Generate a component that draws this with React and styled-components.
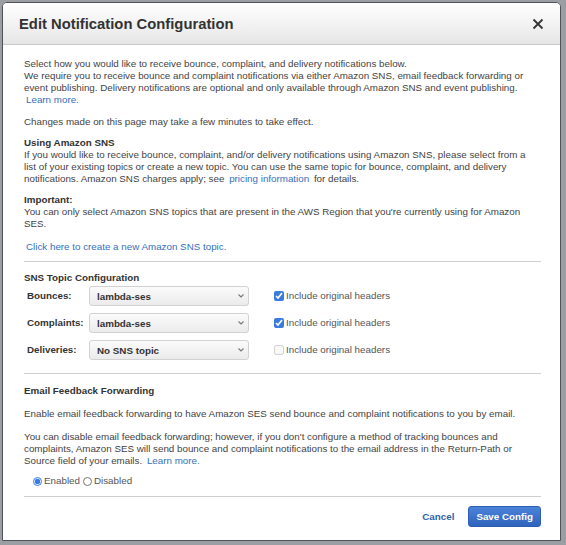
import styled, { createGlobalStyle } from "styled-components"

const GlobalStyle = createGlobalStyle`
  html, body {
    margin: 0;
    padding: 0;
    background: #9b9fa4;
  }
  body {
    font-family: "Liberation Sans", Arial, sans-serif;
  }
`

const Modal = styled.div`
  box-sizing: border-box;
  margin: 2px 0 0 2px;
  width: 559px;
  height: 539px;
  background: #fff;
  border: 1px solid #4f5357;
  border-radius: 5px 5px 0 0;
  display: flex;
  flex-direction: column;
  overflow: hidden;
`

const Header = styled.div`
  box-sizing: border-box;
  height: 42px;
  flex-shrink: 0;
  padding: 0 16px 0 16px;
  display: flex;
  align-items: center;
  justify-content: space-between;
  background: linear-gradient(#ffffff, #e6e6e6);
  border-bottom: 1px solid #c9c9c9;
`

const Title = styled.h2`
  margin: 0;
  font-size: 14.8px;
  font-weight: bold;
  color: #333;
`

const Close = styled.button`
  border: none;
  background: none;
  padding: 0;
  width: 12px;
  height: 12px;
  display: flex;
  cursor: pointer;
`

const Body = styled.div`
  padding: 13px 19px 0 21px;
  font-size: 9.8px;
  line-height: 12px;
  color: #444;
`

const Para = styled.p`
  margin: 0 0 ${(p) => p.$gap ?? 9}px 0;
`

const Heading = styled.div`
  font-weight: bold;
  color: #333;
  margin-bottom: ${(p) => p.$gap || 0}px;
`

const Link = styled.a`
  color: #3670bd;
  text-decoration: none;
  cursor: pointer;
  margin: 0 ${(p) => p.$after || 0}px 0 ${(p) => p.$indent || 0}px;
`

const Rule = styled.hr`
  border: none;
  border-top: 1px solid #cfcfcf;
  margin: ${(p) => p.$top ?? 9}px 0 ${(p) => p.$bottom ?? 9}px 0;
`

const TopicGrid = styled.div`
  display: flex;
  flex-direction: column;
  gap: 7px;
  margin-top: 2px;
`

const TopicRow = styled.div`
  display: flex;
  align-items: center;
  height: 20px;
`

const RowLabel = styled.label`
  width: 62px;
  padding-left: 3px;
  font-weight: bold;
  color: #333;
`

const SelectWrap = styled.div`
  position: relative;
  width: 160px;
  height: 20px;
`

const Select = styled.select`
  appearance: none;
  box-sizing: border-box;
  width: 100%;
  height: 100%;
  padding: 0 0 0 7px;
  border: 1px solid #d2d2d2;
  border-radius: 3px;
  background: linear-gradient(#fbfbfb, #ebebeb);
  font-family: inherit;
  font-size: 9.8px;
  font-weight: bold;
  color: #333;
  outline: none;
`

const Chevron = styled.svg`
  position: absolute;
  right: 5px;
  top: 8px;
  pointer-events: none;
`

const CheckLabel = styled.label`
  display: flex;
  align-items: center;
  margin-left: 25px;
  gap: 2px;
  color: #555;
`

const Check = styled.input`
  width: 10px;
  height: 10px;
  margin: 0;
  accent-color: #3a7be0;
`

const RadioRow = styled.div`
  display: flex;
  align-items: center;
  padding-left: 9px;
  gap: 3px;
  color: #555;
  margin-top: 8px;
`

const RadioLabel = styled.label`
  display: flex;
  align-items: center;
  gap: 2px;
`

const Radio = styled.input`
  width: 9px;
  height: 9px;
  margin: 0;
  accent-color: #3a7be0;
`

const Footer = styled.div`
  display: flex;
  justify-content: flex-end;
  align-items: center;
  gap: 14px;
`

const CancelButton = styled.button`
  border: none;
  background: none;
  padding: 0;
  font-family: inherit;
  font-size: 9.8px;
  font-weight: bold;
  color: #2f63ab;
  cursor: pointer;
`

const SaveButton = styled.button`
  box-sizing: border-box;
  height: 21px;
  padding: 0 7px;
  border: 1px solid #2d5eb1;
  border-radius: 3px;
  background: linear-gradient(#4c82d8, #2f64bd);
  font-family: inherit;
  font-size: 9.8px;
  font-weight: bold;
  color: #fff;
  cursor: pointer;
`

const topics = [
  { label: "Bounces:", value: "lambda-ses", checked: true },
  { label: "Complaints:", value: "lambda-ses", checked: true },
  { label: "Deliveries:", value: "No SNS topic", checked: false, disabled: true },
]

const App = () => {
  return (
    <>
      <GlobalStyle />
      <Modal>
        <Header>
          <Title>Edit Notification Configuration</Title>
          <Close aria-label="Close">
            <svg width="12" height="12" viewBox="0 0 12 12">
              <path d="M1.5 1.5 L10.5 10.5 M10.5 1.5 L1.5 10.5" stroke="#333" strokeWidth="1.8" />
            </svg>
          </Close>
        </Header>
        <Body>
          <Para $gap={10}>
            Select how you would like to receive bounce, complaint, and delivery notifications below.
            <br />
            We require you to receive bounce and complaint notifications via either Amazon SNS, email feedback forwarding or
            event publishing. Delivery notifications are optional and only available through Amazon SNS and event publishing.
            <br />
            <Link $indent={2}>Learn more.</Link>
          </Para>
          <Para>Changes made on this page may take a few minutes to take effect.</Para>
          <Heading>Using Amazon SNS</Heading>
          <Para>
            If you would like to receive bounce, complaint, and/or delivery notifications using Amazon SNS, please select from a
            <br />
            list of your existing topics or create a new topic. You can use the same topic for bounce, complaint, and delivery
            <br />
            notifications. Amazon SNS charges apply; see <Link $indent={2} $after={2}>pricing information</Link> for details.
          </Para>
          <Heading>Important:</Heading>
          <Para $gap={11}>
            You can only select Amazon SNS topics that are present in the AWS Region that you're currently using for Amazon
            SES.
          </Para>
          <Link $indent={2}>Click here to create a new Amazon SNS topic.</Link>
          <Rule $top={8} $bottom={10} />
          <Heading>SNS Topic Configuration</Heading>
          <TopicGrid>
            {topics.map((t) => (
              <TopicRow key={t.label}>
                <RowLabel>{t.label}</RowLabel>
                <SelectWrap>
                  <Select defaultValue={t.value}>
                    <option>lambda-ses</option>
                    <option>No SNS topic</option>
                  </Select>
                  <Chevron width="6" height="4" viewBox="0 0 6 4">
                    <path d="M0.5 0.5 L3 3 L5.5 0.5" fill="none" stroke="#777" strokeWidth="1.1" />
                  </Chevron>
                </SelectWrap>
                <CheckLabel>
                  <Check type="checkbox" defaultChecked={t.checked} disabled={t.disabled} />
                  Include original headers
                </CheckLabel>
              </TopicRow>
            ))}
          </TopicGrid>
          <Rule $top={13} $bottom={11} />
          <Heading $gap={11}>Email Feedback Forwarding</Heading>
          <Para $gap={11}>
            Enable email feedback forwarding to have Amazon SES send bounce and complaint notifications to you by email.
          </Para>
          <Para $gap={0}>
            You can disable email feedback forwarding; however, if you don't configure a method of tracking bounces and
            <br />
            complaints, Amazon SES will send bounce and complaint notifications to the email address in the Return-Path or
            <br />
            Source field of your emails. <Link $indent={2}>Learn more.</Link>
          </Para>
          <RadioRow>
            <RadioLabel>
              <Radio type="radio" name="fwd" defaultChecked />
              Enabled
            </RadioLabel>
            <RadioLabel>
              <Radio type="radio" name="fwd" />
              Disabled
            </RadioLabel>
          </RadioRow>
          <Rule $top={9} $bottom={9} />
          <Footer>
            <CancelButton>Cancel</CancelButton>
            <SaveButton>Save Config</SaveButton>
          </Footer>
        </Body>
      </Modal>
    </>
  )
}

export default App
